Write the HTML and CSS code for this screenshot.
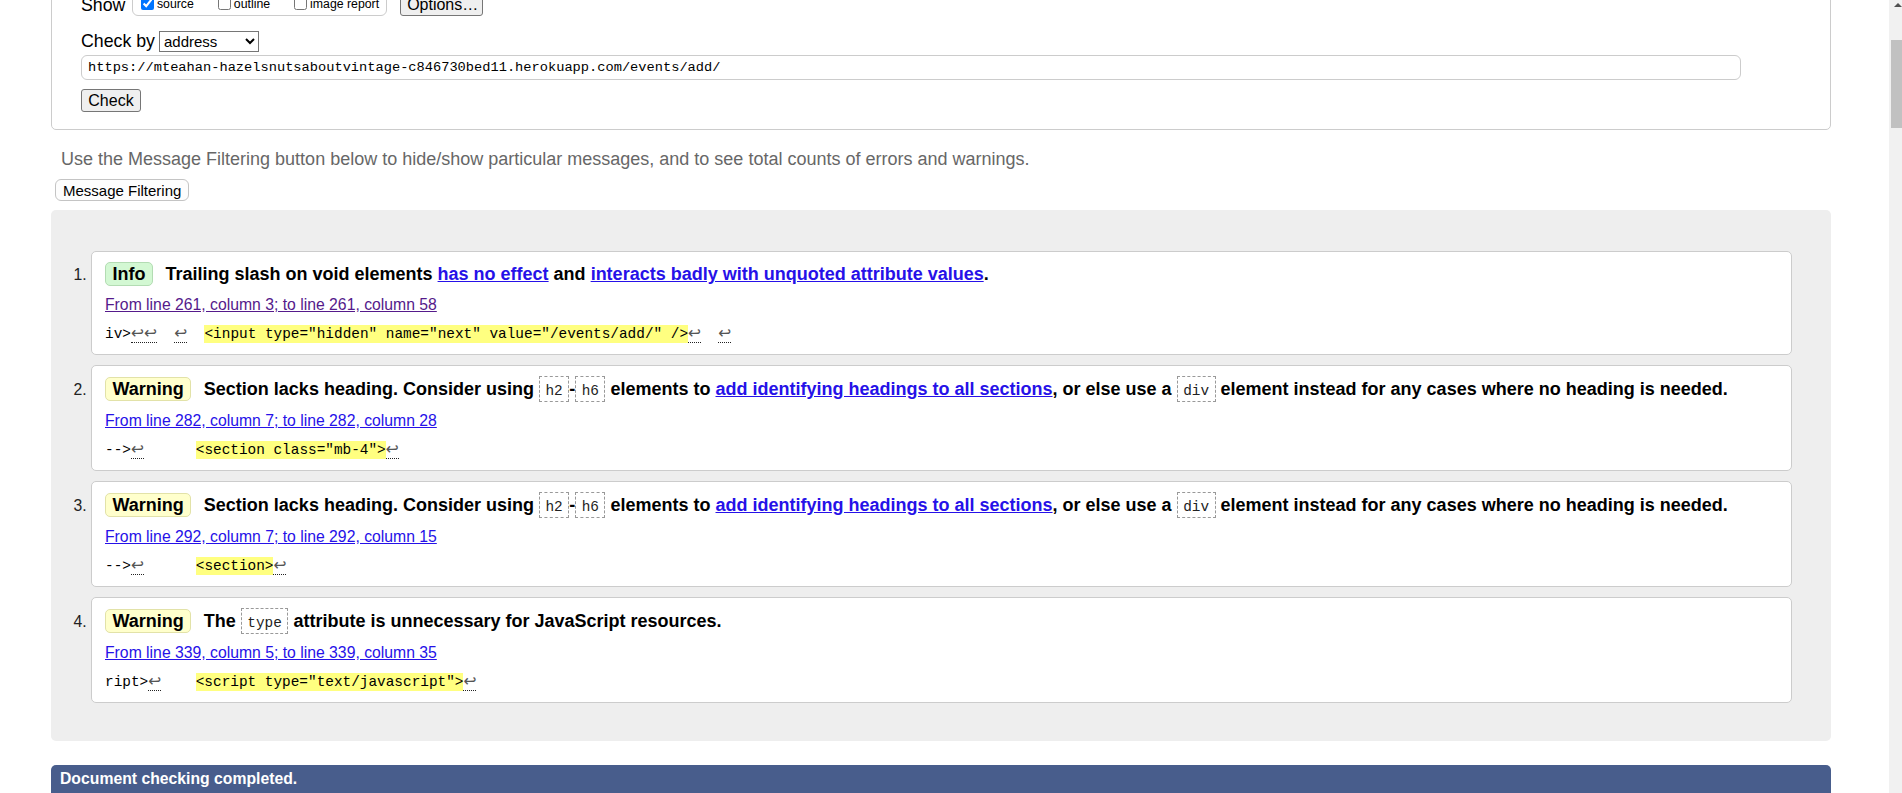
FILE: index.html
```html
<!DOCTYPE html>
<html lang="en">
<head>
<meta charset="utf-8">
<title>Nu Html Checker</title>
<link rel="stylesheet" href="styles.css">
</head>
<body>
<div class="page">
  <form class="checker">
    <div class="show-row">
      <span class="lbl">Show</span>
      <div class="opts">
        <label class="opt"><input type="checkbox" checked>source</label>
        <label class="opt"><input type="checkbox">outline</label>
        <label class="opt"><input type="checkbox">image report</label>
      </div>
      <button type="button" class="btn btn-options">Options…</button>
    </div>
    <div class="checkby-row">
      <span class="lbl">Check by</span>
      <select class="sel"><option>address</option></select>
    </div>
    <input class="url" type="text" value="https://mteahan-hazelsnutsaboutvintage-c846730bed11.herokuapp.com/events/add/">
    <button type="button" class="btn btn-check">Check</button>
  </form>

  <p class="hint">Use the Message Filtering button below to hide/show particular messages, and to see total counts of errors and warnings.</p>
  <button type="button" class="btn-filter">Message Filtering</button>

  <div class="results">
    <ol class="msgs">
      <li class="msg">
        <p class="title"><strong class="badge badge-info">Info</strong>Trailing slash on void elements <a href="#a">has no effect</a> and <a href="#b">interacts badly with unquoted attribute values</a>.</p>
        <p class="loc"><a class="visited" href="#l1">From line 261, column 3; to line 261, column 58</a></p>
        <p class="extract">iv&gt;<span class="lf">↩↩</span>  <span class="lf">↩</span>  <mark>&lt;input type="hidden" name="next" value="/events/add/" /&gt;</mark><span class="lf">↩</span>  <span class="lf">↩</span></p>
      </li>
      <li class="msg">
        <p class="title"><strong class="badge badge-warn">Warning</strong>Section lacks heading. Consider using <code class="chip">h2</code>-<code class="chip">h6</code> elements to <a href="#c">add identifying headings to all sections</a>, or else use a <code class="chip">div</code> element instead for any cases where no heading is needed.</p>
        <p class="loc"><a href="#l2">From line 282, column 7; to line 282, column 28</a></p>
        <p class="extract">--&gt;<span class="lf">↩</span>      <mark>&lt;section class="mb-4"&gt;</mark><span class="lf">↩</span></p>
      </li>
      <li class="msg">
        <p class="title"><strong class="badge badge-warn">Warning</strong>Section lacks heading. Consider using <code class="chip">h2</code>-<code class="chip">h6</code> elements to <a href="#c">add identifying headings to all sections</a>, or else use a <code class="chip">div</code> element instead for any cases where no heading is needed.</p>
        <p class="loc"><a href="#l3">From line 292, column 7; to line 292, column 15</a></p>
        <p class="extract">--&gt;<span class="lf">↩</span>      <mark>&lt;section&gt;</mark><span class="lf">↩</span></p>
      </li>
      <li class="msg">
        <p class="title"><strong class="badge badge-warn">Warning</strong>The <code class="chip">type</code> attribute is unnecessary for JavaScript resources.</p>
        <p class="loc"><a href="#l4">From line 339, column 5; to line 339, column 35</a></p>
        <p class="extract">ript&gt;<span class="lf">↩</span>    <mark>&lt;script type="text/javascript"&gt;</mark><span class="lf">↩</span></p>
      </li>
    </ol>
  </div>

  <div class="done">Document checking completed.</div>
</div>

<div class="vscroll">
  <div class="vscroll-arrow"></div>
  <div class="vscroll-thumb"></div>
</div>
</body>
</html>
```

FILE: styles.css
```css
html, body {
  margin: 0;
  padding: 0;
}

body {
  font-family: "Liberation Sans", Arial, sans-serif;
  color: #000;
  background: #fff;
  height: 793px;
  overflow: hidden;
}

.page {
  width: 1780px;
  margin-left: 51px;
  margin-top: -20px;
}

/* ---------- top form ---------- */
.checker {
  display: block;
  border: 1px solid #cccccc;
  border-radius: 5px;
  padding: 8px 29px 17px;
}

.lbl {
  font-size: 17.75px;
  line-height: normal;
}

.show-row {
  display: flex;
  align-items: flex-end;
}

.opts {
  display: flex;
  align-items: center;
  margin-left: 6.5px;
  border: 1px solid #cccccc;
  border-radius: 6px;
  padding: 4px 7px 2px 4px;
}

.opt {
  display: flex;
  align-items: center;
  font-size: 12.3px;
  margin-right: 20px;
}

.opt:last-child {
  margin-right: 0;
}

.opt input {
  width: 13px;
  height: 13px;
  margin: 3px 3px 3px 4px;
}

.btn {
  font-family: "Liberation Sans", Arial, sans-serif;
  font-size: 16px;
  color: #000;
  background: #efefef;
  border: 1px solid #767676;
  border-radius: 3px;
  box-sizing: border-box;
  height: 23px;
  padding: 0 6px;
}

.btn-options {
  margin-left: 13px;
  width: 83px;
}

.checkby-row {
  display: flex;
  align-items: center;
  margin-top: 15px;
}

.sel {
  margin-left: 4px;
  width: 100px;
  height: 21px;
  box-sizing: border-box;
  font-family: "Liberation Sans", Arial, sans-serif;
  font-size: 15px;
  color: #000;
  background: #fff;
  border: 1px solid #767676;
  border-radius: 0;
}

.url {
  display: block;
  margin-top: 3px;
  width: 1660px;
  height: 25px;
  box-sizing: border-box;
  border: 1px solid #cccccc;
  border-radius: 6px;
  padding: 0 6px;
  font-family: "Liberation Mono", "DejaVu Sans Mono", monospace;
  font-size: 13.7px;
  color: #000;
  background: #fff;
}

.btn-check {
  display: block;
  margin-top: 9px;
  width: 60px;
}

/* ---------- hint + filter ---------- */
.hint {
  margin: 19px 0 0 10px;
  font-size: 18px;
  line-height: 20px;
  color: #676767;
}

.btn-filter {
  display: block;
  margin: 10px 0 0 4px;
  height: 22px;
  box-sizing: border-box;
  padding: 0 7px;
  font-family: "Liberation Sans", Arial, sans-serif;
  font-size: 15px;
  color: #000;
  background: #fdfdfd;
  border: 1px solid #c4c4c4;
  border-radius: 6px;
}

/* ---------- results ---------- */
.results {
  margin-top: 9px;
  background: #eeeeee;
  border-radius: 5px;
  padding: 41px 39px 38px 40px;
}

.msgs {
  margin: 0;
  padding: 0;
}

.msg {
  background: #fff;
  border: 1px solid #cccccc;
  border-radius: 5px;
  padding: 10px 14px 11px 13px;
  margin-bottom: 10px;
  font-size: 15.75px;
  color: #222;
}

.msg:last-child {
  margin-bottom: 0;
}

.msg p {
  margin: 0;
}

.title {
  font-size: 18px;
  font-weight: bold;
  line-height: 24px;
  color: #000;
}

.badge {
  display: inline-block;
  line-height: 20px;
  padding: 1px 6.5px;
  border-radius: 5px;
  margin-right: 12.5px;
}

.badge-info {
  background: #d3f8d3;
  border: 1px solid #b3dcb3;
}

.badge-warn {
  background: #ffffcc;
  border: 1px solid #e2e2a8;
}

.chip {
  display: inline-block;
  font-family: "Liberation Mono", "DejaVu Sans Mono", monospace;
  font-weight: normal;
  font-size: 14.4px;
  line-height: 16px;
  padding: 6px 5.5px 2px;
  border: 1px dashed #999;
  color: #222;
}

a {
  color: #2611e8;
  text-decoration: underline;
}

a.visited {
  color: #551a8b;
}

.loc {
  margin-top: 10px !important;
  font-size: 15.75px;
  line-height: 18px;
}

.extract {
  margin-top: 11px !important;
  font-family: "Liberation Mono", "DejaVu Sans Mono", monospace;
  font-size: 14.4px;
  line-height: 18px;
  white-space: pre;
  color: #000;
}

.extract mark {
  background: #ffff80;
  color: #000;
  padding: 1px 0;
}

.lf {
  font-family: "DejaVu Sans", sans-serif;
  font-size: 15.5px;
  line-height: 12px;
  color: #555;
  border-bottom: 1px dotted #222;
}

/* ---------- bottom bar ---------- */
.done {
  margin-top: 24px;
  background: #485d8c;
  color: #fff;
  font-weight: bold;
  font-size: 15.75px;
  line-height: 18px;
  padding: 5px 9px 10px;
  border-radius: 5px 5px 0 0;
}

/* ---------- scrollbar overlay ---------- */
.vscroll {
  position: fixed;
  top: 0;
  left: 1889px;
  width: 17px;
  height: 793px;
  background: #f1f1f1;
}

.vscroll-arrow {
  position: absolute;
  top: 3px;
  left: 5px;
  width: 0;
  height: 0;
  border-left: 4px solid transparent;
  border-right: 4px solid transparent;
  border-bottom: 4px solid #505050;
}

.vscroll-thumb {
  position: absolute;
  top: 40px;
  left: 2px;
  width: 13px;
  height: 88px;
  background: #c1c1c1;
}
```
